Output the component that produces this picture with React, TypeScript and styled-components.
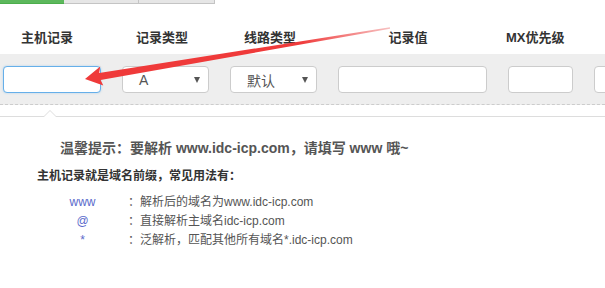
import React from 'react';
import styled, { createGlobalStyle } from 'styled-components';

const GlobalStyle = createGlobalStyle`
  html, body {
    margin: 0;
    padding: 0;
    background: #ffffff;
  }
  body {
    font-family: "Liberation Sans", "Noto Sans CJK SC", sans-serif;
    overflow: hidden;
  }
`;

const Page = styled.div`
  position: relative;
  width: 605px;
  height: 288px;
  overflow: hidden;
`;

const Tabs = styled.div`
  display: flex;
  height: 4px;
`;

const Tab = styled.div<{ $active?: boolean; $w: number }>`
  width: ${(p) => p.$w}px;
  box-sizing: border-box;
  background: ${(p) => (p.$active ? '#5cb85c' : '#e6e6e6')};
  border-bottom: 1px solid ${(p) => (p.$active ? '#4cae4c' : '#c4c4c4')};
  border-right: ${(p) => (p.$active ? 'none' : '1px solid #c4c4c4')};
`;

const HeaderRow = styled.div`
  display: flex;
  align-items: flex-end;
  height: 50px;
  box-sizing: border-box;
  padding-bottom: 8px;
`;

const HeaderCell = styled.div<{ $w: number }>`
  width: ${(p) => p.$w}px;
  flex: none;
  text-align: center;
  white-space: nowrap;
  font-size: 13px;
  font-weight: bold;
  line-height: 16px;
  color: #333333;
`;

const FieldBand = styled.div`
  display: flex;
  gap: 21px;
  height: 51px;
  box-sizing: border-box;
  padding: 12px 0 0 3px;
  background: #eeeeee;
  border-bottom: 1px dashed #cccccc;
`;

const TextField = styled.div<{ $w: number; $focus?: boolean }>`
  width: ${(p) => p.$w}px;
  height: 27px;
  flex: none;
  box-sizing: border-box;
  background: #ffffff;
  border: 1px solid ${(p) => (p.$focus ? '#66afe9' : '#cccccc')};
  border-radius: 4px;
  box-shadow: ${(p) => (p.$focus ? '0 0 2px rgba(102, 175, 233, 0.5)' : 'none')};
`;

const SelectBox = styled.div<{ $w: number }>`
  width: ${(p) => p.$w}px;
  height: 27px;
  flex: none;
  box-sizing: border-box;
  display: flex;
  align-items: center;
  justify-content: space-between;
  padding: 0 8px 0 16px;
  background: #ffffff;
  border: 1px solid #cccccc;
  border-radius: 4px;
  font-size: 14px;
  color: #555555;
`;

const Caret = styled.span`
  width: 0;
  height: 0;
  border-left: 3.5px solid transparent;
  border-right: 3.5px solid transparent;
  border-top: 6px solid #555555;
`;

const HelpBox = styled.div`
  position: relative;
  margin-top: 11px;
  border-top: 1px solid #dddddd;
  padding: 21px 0 0 0;

  &::before,
  &::after {
    content: '';
    position: absolute;
    left: 43px;
    width: 0;
    height: 0;
    border-left: 7px solid transparent;
    border-right: 7px solid transparent;
  }
  &::before {
    top: -7px;
    border-bottom: 7px solid #dddddd;
  }
  &::after {
    top: -6px;
    border-bottom: 7px solid #ffffff;
  }
`;

const TipTitle = styled.div`
  padding-left: 60px;
  font-size: 14px;
  font-weight: bold;
  line-height: 20px;
  color: #555555;
`;

const TipSub = styled.div`
  margin-top: 9px;
  padding-left: 37px;
  font-size: 12px;
  font-weight: bold;
  line-height: 18px;
  color: #333333;
`;

const UsageList = styled.div`
  margin-top: 8px;
  padding-left: 37px;
`;

const UsageRow = styled.div`
  display: flex;
  font-size: 12px;
  line-height: 19px;
`;

const UsageKey = styled.span`
  width: 91px;
  flex: none;
  text-align: center;
  color: #5a6acb;
`;

const UsageText = styled.span`
  color: #555555;
`;

const ArrowLayer = styled.svg`
  position: absolute;
  left: 0;
  top: 0;
  pointer-events: none;
`;

const headers = [
  { label: '主机记录', w: 94 },
  { label: '记录类型', w: 136 },
  { label: '线路类型', w: 80 },
  { label: '记录值', w: 196 },
  { label: 'MX优先级', w: 58 },
];

const usages = [
  { key: 'www', text: '：解析后的域名为www.idc-icp.com' },
  { key: '@', text: '：直接解析主域名idc-icp.com' },
  { key: '*', text: '：泛解析，匹配其他所有域名*.idc-icp.com' },
];

// red annotation arrow pointing at the host record input
const Arrow: React.FC = () => (
  <ArrowLayer width="605" height="288" viewBox="0 0 605 288">
    <defs>
      <linearGradient id="tailFade" gradientUnits="userSpaceOnUse" x1="392" y1="27" x2="300" y2="43">
        <stop offset="0" stopColor="#f7c4c4" />
        <stop offset="1" stopColor="#ef3a3a" />
      </linearGradient>
    </defs>
    <polygon
      points="85,79 103.3,85.6 100.6,80.1 390.1,28.7 389.9,27.3 99.2,73 100.2,66.6"
      fill="url(#tailFade)"
    />
  </ArrowLayer>
);

const App: React.FC = () => {
  return (
    <Page>
      <GlobalStyle />
      <Tabs>
        <Tab $active $w={64} />
        <Tab $w={75} />
        <Tab $w={76} />
      </Tabs>

      <HeaderRow>
        {headers.map((h) => (
          <HeaderCell key={h.label} $w={h.w}>
            {h.label}
          </HeaderCell>
        ))}
      </HeaderRow>

      <FieldBand>
        <TextField $w={98} $focus />
        <SelectBox $w={87}>
          A<Caret />
        </SelectBox>
        <SelectBox $w={87}>
          默认<Caret />
        </SelectBox>
        <TextField $w={149} />
        <TextField $w={65} />
        <TextField $w={120} />
      </FieldBand>

      <HelpBox>
        <TipTitle>温馨提示：要解析 www.idc-icp.com，请填写 www 哦~</TipTitle>
        <TipSub>主机记录就是域名前缀，常见用法有：</TipSub>
        <UsageList>
          {usages.map((u) => (
            <UsageRow key={u.key}>
              <UsageKey>{u.key}</UsageKey>
              <UsageText>{u.text}</UsageText>
            </UsageRow>
          ))}
        </UsageList>
      </HelpBox>

      <Arrow />
    </Page>
  );
};

export default App;
